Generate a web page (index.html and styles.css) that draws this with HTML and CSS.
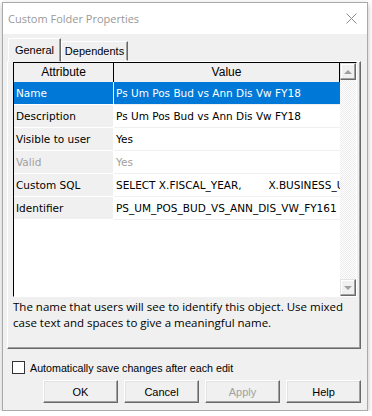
FILE: index.html
```html
<!DOCTYPE html>
<html lang="en">
<head>
  <meta charset="UTF-8" />
  <title>Custom Folder Properties</title>
  <link rel="stylesheet" href="styles.css">
</head>
<body>
  <div class="window">
    <div class="titlebar">
      <span class="title">Custom Folder Properties</span>
      <svg class="close" width="11" height="11" viewBox="0 0 11 11">
        <path d="M0.5 0.5 L10.5 10.5 M10.5 0.5 L0.5 10.5" stroke="#8a8a8a" stroke-width="1" fill="none"/>
      </svg>
    </div>

    <div class="content">
      <div class="tabs">
        <div class="tab active">General</div>
        <div class="tab">Dependents</div>
      </div>

      <div class="panel">
        <div class="list">
          <div class="grid">
            <div class="head">Attribute</div>
            <div class="head">Value</div>

            <div class="key sel">Name</div>
            <div class="val sel">Ps Um Pos Bud vs Ann Dis Vw FY18</div>

            <div class="key">Description</div>
            <div class="val">Ps Um Pos Bud vs Ann Dis Vw FY18</div>

            <div class="key">Visible to user</div>
            <div class="val">Yes</div>

            <div class="key off">Valid</div>
            <div class="val off">Yes</div>

            <div class="key">Custom SQL</div>
            <div class="val">SELECT X.FISCAL_YEAR,        X.BUSINESS_UNIT</div>

            <div class="key">Identifier</div>
            <div class="val">PS_UM_POS_BUD_VS_ANN_DIS_VW_FY161</div>
          </div>
          <div class="scrollbar">
            <div class="sb-btn"><span class="arrow up"></span></div>
            <div class="sb-btn"><span class="arrow down"></span></div>
          </div>
        </div>
        <p class="hint">The name that users will see to identify this object. Use mixed case text and spaces to give a meaningful name.</p>
      </div>

      <label class="autosave"><span class="check"></span>Automatically save changes after each edit</label>

      <div class="buttons">
        <button class="btn">OK</button>
        <button class="btn">Cancel</button>
        <button class="btn" disabled>Apply</button>
        <button class="btn">Help</button>
      </div>
    </div>
  </div>
</body>
</html>
```

FILE: styles.css
```css
body {
  margin: 0;
  background: #fff;
  font-family: "Liberation Sans", Arial, sans-serif;
  color: #000;
}
.window {
  margin: 2px 0 0 2px;
  width: 366px;
  height: 409px;
  box-sizing: border-box;
  border: 1px solid #aaa;
  background: #f0f0f0;
  box-shadow: 0 2px 6px rgba(0,0,0,0.25);
}
.titlebar {
  height: 31px;
  background: #fff;
  display: flex;
  align-items: center;
  justify-content: space-between;
  padding: 0 10px 0 5px;
}
.title {
  font-family: "Open Sans", sans-serif;
  font-size: 11px;
  color: #999;
}
.content {
  padding: 4px 6px 0 4px;
}
.tabs {
  display: flex;
  align-items: flex-end;
  height: 23px;
  padding-left: 1px;
}
.tab {
  height: 20px;
  width: 67px;
  box-sizing: border-box;
  border: 1px solid;
  border-color: #fff #696969 transparent #fff;
  box-shadow: inset -1px 0 #a0a0a0;
  font-size: 11px;
  display: flex;
  align-items: center;
  justify-content: center;
}
.tab.active {
  width: 53px;
  height: 24px;
  margin-bottom: -1px;
  padding-bottom: 1px;
  position: relative;
  z-index: 1;
  background: #f0f0f0;
}
.panel {
  height: 288px;
  box-sizing: border-box;
  border: 1px solid;
  border-color: #fff #696969 #696969 #fff;
  box-shadow: inset -1px -1px #a0a0a0;
  padding: 0 3px 0 5px;
}
.list {
  display: flex;
  height: 235px;
  box-sizing: border-box;
  border: 1px solid;
  border-color: #000 #fff #fff #000;
  background: #fff;
}
.grid {
  flex: 1;
  min-width: 0;
  display: grid;
  grid-template-columns: 100px minmax(0, 1fr);
  grid-template-rows: 19px;
  grid-auto-rows: 23px;
  align-content: start;
}
.head {
  background: #f0f0f0;
  border-right: 1px solid #000;
  font-size: 12px;
  line-height: 19px;
  text-align: center;
}
.key, .val {
  font-family: "DejaVu Sans", sans-serif;
  font-size: 10.5px;
  line-height: 22px;
  padding-left: 2px;
  white-space: pre;
  overflow: hidden;
}
.key {
  background: #f0f0f0;
  border-right: 1px solid #fff;
  border-bottom: 1px solid #fff;
}
.val {
  border-bottom: 1px solid #f0f0f0;
}
.sel {
  background: #0078d7;
  color: #fff;
}
.off {
  color: #a0a0a0;
}
.scrollbar {
  width: 16px;
  display: flex;
  flex-direction: column;
  justify-content: space-between;
  background: repeating-conic-gradient(#ececec 0 25%, #fff 0 50%) 0 0 / 2px 2px;
}
.sb-btn {
  height: 17px;
  box-sizing: border-box;
  background: #f0f0f0;
  border: 1px solid;
  border-color: #e3e3e3 #696969 #696969 #e3e3e3;
  box-shadow: inset -1px -1px #a0a0a0, inset 1px 1px #fff;
  display: flex;
  align-items: center;
  justify-content: center;
}
.arrow {
  width: 0;
  height: 0;
  border-left: 4px solid transparent;
  border-right: 4px solid transparent;
}
.arrow.up {
  border-bottom: 4px solid #a0a0a0;
}
.arrow.down {
  border-top: 4px solid #a0a0a0;
}
.hint {
  margin: 2px 0 0;
  font-family: "Open Sans", sans-serif;
  font-size: 11.5px;
  line-height: 16px;
}
.autosave {
  display: flex;
  align-items: center;
  gap: 5px;
  margin: 12px 0 0 5px;
  height: 13px;
  font-size: 10.7px;
}
.check {
  width: 13px;
  height: 13px;
  box-sizing: border-box;
  border: 1px solid #333;
  background: #fff;
}
.buttons {
  display: flex;
  justify-content: flex-end;
  gap: 6px;
  margin-top: 6px;
}
.btn {
  width: 75px;
  height: 23px;
  box-sizing: border-box;
  padding: 0;
  background: #f0f0f0;
  border: 1px solid;
  border-color: #fff #696969 #696969 #fff;
  box-shadow: inset -1px -1px #a0a0a0, inset 1px 1px #e3e3e3;
  font-family: "Liberation Sans", Arial, sans-serif;
  font-size: 11px;
  color: #000;
}
.btn:disabled {
  color: #a0a0a0;
}
```
